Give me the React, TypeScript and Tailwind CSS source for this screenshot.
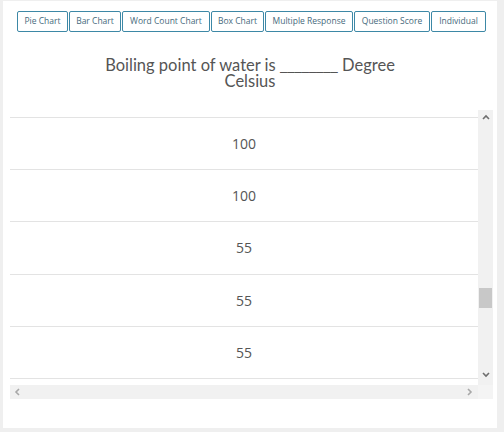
import * as React from "react"

const TABS = [
  { label: "Pie Chart", w: "w-[51px]" },
  { label: "Bar Chart", w: "w-[52px]" },
  { label: "Word Count Chart", w: "w-[88px]" },
  { label: "Box Chart", w: "w-[53px]" },
  { label: "Multiple Response", w: "w-[88px]" },
  { label: "Question Score", w: "w-[76px]" },
  { label: "Individual", w: "w-[55px]" },
]

const ROWS = ["100", "100", "55", "55", "55"]

function Chevron({ dir }: { dir: "up" | "down" | "left" | "right" }) {
  const d = {
    up: "M1 5 L4 2 L7 5",
    down: "M1 2 L4 5 L7 2",
    left: "M5 1 L2 4 L5 7",
    right: "M2 1 L5 4 L2 7",
  }[dir]
  return (
    <svg width="8" height="8" viewBox="0 0 8 8" fill="none">
      <path d={d} stroke={dir === "left" || dir === "right" ? "#a8a8a8" : "#6e6e6e"} strokeWidth="1.6" />
    </svg>
  )
}

export default function App() {
  return (
    <div className="w-[504px] h-[432px] bg-[#efefef] pl-[3px] pt-[1px]" style={{ fontFamily: '"Open Sans", "Noto Sans", sans-serif' }}>
      <div className="w-[494px] h-[427px] bg-white flex flex-col">
        <div className="flex gap-[1px] pl-[14px] pt-[10px]">
          {TABS.map((t) => (
            <button
              key={t.label}
              className={`${t.w} h-[21px] border border-[#3d88a6] rounded-[2px] text-[8.5px] text-[#466a7c] bg-white flex items-center justify-center whitespace-nowrap`}
            >
              {t.label}
            </button>
          ))}
        </div>

        <div
          className="mt-[25px] mx-auto w-[320px] text-center text-[16.5px] leading-[14px] text-[#555]"
          style={{ fontFamily: 'Lato, "Open Sans", sans-serif' }}
        >
          Boiling point of water is{" "}
          <span className="leading-none" style={{ fontFamily: '"Open Sans", sans-serif' }}>________</span> Degree Celsius
        </div>

        <div className="mt-[22px] ml-[7px] mr-[4px] flex flex-col">
          <div className="flex">
            <div className="flex-1 h-[275px] overflow-hidden">
              <div className="h-[7px]" />
              {ROWS.map((v, i) => (
                <div key={i} className="h-[52.4px] border-t border-[#e3e3e3] flex items-center justify-center text-[14px] text-[#555]">
                  {v}
                </div>
              ))}
              <div className="border-t border-[#e3e3e3]" />
            </div>
            <div className="w-[15px] h-[275px] bg-[#f1f1f1] flex flex-col items-center">
              <div className="h-[15px] flex items-center justify-center pt-[2px]">
                <Chevron dir="up" />
              </div>
              <div className="h-[163px]" />
              <div className="w-[13px] h-[20px] bg-[#c8c8c8]" />
              <div className="flex-1" />
              <div className="h-[15px] flex items-center justify-center pb-[4px]">
                <Chevron dir="down" />
              </div>
            </div>
          </div>
          <div className="flex h-[14px]">
            <div className="flex-1 bg-[#f1f1f1] flex items-center justify-between px-[4px]">
              <Chevron dir="left" />
              <Chevron dir="right" />
            </div>
            <div className="w-[15px] bg-[#f4f4f4]" />
          </div>
        </div>
      </div>
    </div>
  )
}
